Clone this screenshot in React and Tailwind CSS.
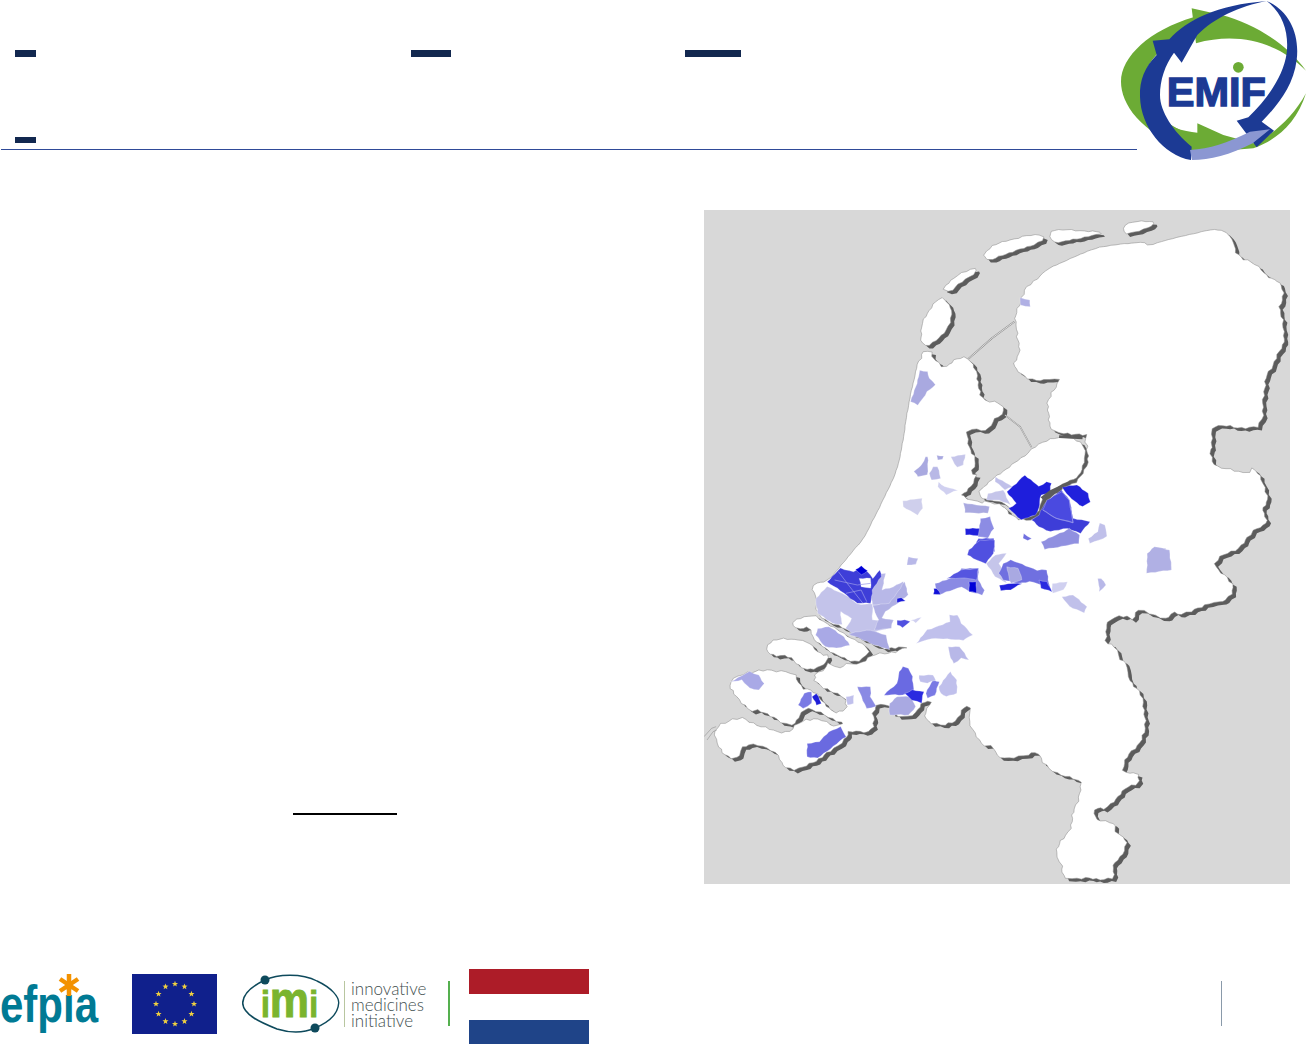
import React from "react";

// map points are in 0..1548 x 0..2022 (x stretched a bit, y is 3x)
const south = (pts) => pts.map(([x, y]) => [x, y + 990]);
const toPoints = (pts) => pts.map((p) => p.map((n) => n.toFixed(1)).join(",")).join(" ");

// wobble an edge so it reads as a traced border
const wobble = (pts, amp, calmAt) => {
  const out = [];
  let k = 0;
  pts.forEach((p, i) => {
    const q = pts[(i + 1) % pts.length];
    const dx = q[0] - p[0];
    const dy = q[1] - p[1];
    const len = Math.hypot(dx, dy) || 1;
    const steps = Math.max(1, Math.round(len / 11));
    const a = calmAt && calmAt(p) ? amp * 0.2 : amp;
    for (let s = 0; s < steps; s++) {
      const t = s / steps;
      const off = a * (Math.sin(k * 2.3) + 0.6 * Math.sin(k * 0.9 + 1));
      out.push([p[0] + dx * t - (dy / len) * off, p[1] + dy * t + (dx / len) * off]);
      k++;
    }
  });
  return out;
};

// round off the corners first, for the coastlines
const organic = (pts, amp, calmAt) => {
  const smooth = [];
  pts.forEach((p, i) => {
    const q = pts[(i + 1) % pts.length];
    smooth.push([p[0] * 0.75 + q[0] * 0.25, p[1] * 0.75 + q[1] * 0.25]);
    smooth.push([p[0] * 0.25 + q[0] * 0.75, p[1] * 0.25 + q[1] * 0.75]);
  });
  return wobble(smooth, amp, calmAt);
};

// the north sea side is smooth, the rest of the border is jagged
const isSeaSide = ([x, y]) => (x < 560 && y < 1130) || (y < 210 && x < 1400);

const mainland = organic([
  [572, 425], [600, 420], [603, 445], [635, 475], [660, 450], [695, 440], [710, 460], [725, 510], [730, 570],
  [780, 575], [795, 610], [770, 625], [745, 665], [695, 655], [695, 700], [720, 750], [705, 790], [725, 795],
  [690, 850], [680, 855], [700, 870], [730, 878], [745, 872], [790, 888], [805, 908], [840, 935], [885, 922],
  [905, 882], [955, 832], [990, 810], [1012, 770], [1015, 715], [1005, 690], [1012, 672], [930, 672], [910, 640],
  [908, 560], [945, 510], [920, 505], [890, 515], [845, 500], [815, 470], [835, 430], [825, 350], [820, 330],
  [845, 240], [880, 205], [910, 175], [960, 150], [1030, 115], [1090, 103], [1130, 100], [1160, 95], [1175, 108],
  [1220, 90], [1290, 72], [1340, 58], [1375, 62], [1395, 85], [1410, 140], [1470, 170], [1490, 205], [1525, 215],
  [1530, 260], [1520, 300], [1530, 340], [1535, 390], [1510, 450], [1480, 510], [1475, 650], [1430, 655],
  [1350, 645], [1340, 660], [1345, 710], [1335, 720], [1345, 765], [1390, 780], [1435, 790], [1450, 770],
  [1480, 820], [1490, 870], [1475, 900], [1490, 940], [1440, 970], [1415, 1020],
  ...south([
    [1370, 40], [1345, 80], [1395, 125], [1400, 150], [1370, 190], [1340, 185], [1270, 225], [1235, 215], [1225, 240],
    [1200, 230], [1170, 215], [1140, 210], [1140, 240], [1110, 225], [1060, 245], [1065, 285], [1060, 305], [1090, 325],
    [1095, 350], [1120, 375], [1115, 405], [1160, 470], [1165, 540], [1165, 590], [1110, 660], [1105, 700], [1145, 695],
    [1150, 730], [1110, 745], [1065, 810], [1030, 800], [1035, 840], [1085, 850], [1090, 880], [1115, 895], [1110, 945],
    [1075, 975], [1090, 1015], [1045, 1018], [1010, 1015], [960, 1015], [945, 1005], [945, 970], [930, 945], [935, 910],
    [965, 880], [975, 820], [990, 770], [1000, 730], [985, 720], [945, 705], [900, 680], [880, 630], [850, 650],
    [775, 655], [765, 620], [735, 615], [700, 555], [705, 510], [690, 495], [655, 560], [585, 545], [583, 510],
    [605, 490], [585, 480], [550, 530], [500, 530], [490, 490], [445, 500], [450, 580], [385, 570], [380, 590],
    [345, 625], [300, 660], [250, 690], [205, 680], [195, 635], [125, 610], [95, 625], [95, 655], [65, 655],
    [30, 610], [30, 560], [90, 530], [130, 550], [215, 585], [260, 540], [300, 535], [345, 560], [370, 548],
    [345, 540], [280, 505], [265, 505], [240, 555], [210, 550], [185, 535], [150, 510], [120, 515], [95, 480],
    [60, 435], [100, 400], [160, 390], [235, 395], [255, 440], [290, 455], [320, 490], [340, 520], [375, 510],
    [375, 470], [330, 455], [280, 410], [325, 385], [328, 365], [350, 385], [385, 370], [410, 375], [440, 345],
    [490, 340], [550, 318], [490, 328], [440, 312], [400, 285], [370, 265], [305, 232], [295, 200], [300, 170],
    [285, 155], [290, 130], [325, 125], [360, 80], [395, 30], [420, 0],
  ]),
  [460, 900], [490, 830], [510, 780], [525, 700], [540, 580],
], 2.5, isSeaSide);

const islands = [
  [[572, 395], [575, 340], [600, 290], [625, 262], [640, 270], [655, 300], [650, 350], [610, 395], [590, 410]],
  [[628, 235], [670, 195], [715, 172], [722, 185], [680, 215], [650, 248]],
  [[738, 130], [770, 100], [880, 70], [905, 85], [860, 110], [800, 130], [750, 155]],
  [[913, 65], [930, 58], [1045, 65], [1050, 72], [990, 85], [930, 100], [915, 85]],
  [[1105, 60], [1115, 38], [1185, 32], [1190, 45], [1120, 75]],
  // flevoland
  [[728, 840], [770, 800], [850, 735], [870, 712], [930, 678], [990, 688], [1008, 720], [1003, 770], [985, 805],
    [950, 820], [895, 860], [880, 915], [842, 925], [805, 895], [790, 875], [740, 868], [728, 860]],
  ...[
    // goeree
    [[230, 240], [290, 225], [310, 240], [375, 285], [430, 320], [438, 340], [400, 370], [350, 345], [320, 325],
      [290, 300], [280, 260], [245, 270]],
    // schouwen
    [[160, 320], [190, 295], [270, 300], [310, 345], [330, 345], [320, 375], [280, 390], [250, 380], [225, 345], [180, 350]],
  ].map(south),
].map((pts) => organic(pts, 1.5));

const northAreas = [
  ["#b0b0e4", [[835, 262], [860, 270], [862, 290], [835, 285]]],
  ["#a9a9e0", [[570, 480], [590, 485], [595, 505], [612, 525], [590, 545], [565, 585], [545, 575], [560, 530]]],
  ["#a9a9e0", [[585, 740], [592, 740], [590, 795], [565, 800], [555, 785], [575, 765]]],
  ["#a9a9e0", [[615, 735], [632, 738], [630, 748], [618, 750]]],
  ["#c5c5ea", [[652, 740], [690, 733], [685, 765], [668, 772]]],
  ["#b8b8e6", [[605, 770], [618, 770], [625, 805], [600, 810], [595, 790]]],
  ["#d0d0f0", [[620, 815], [635, 830], [670, 840], [640, 855], [618, 830]]],
  ["#cfcfec", [[525, 872], [575, 865], [578, 895], [565, 915], [525, 890]]],
  ["#c0c0ea", [[770, 800], [815, 830], [795, 840], [770, 815]]],
  ["#c5c5ea", [[750, 850], [790, 840], [810, 885], [780, 870], [745, 870]]],
  ["#a9a9e0", [[685, 878], [720, 885], [755, 890], [750, 910], [690, 908]]],
  ["#3d3dd8", [[945, 840], [965, 870], [975, 925], [1020, 935], [995, 970], [960, 955], [915, 965], [885, 950], [865, 930], [885, 915], [900, 880]]],
  ["#4a4ae0", [[905, 870], [945, 845], [965, 870], [975, 938], [930, 925], [895, 900]]],
  ["#1e1edc", [[848, 795], [885, 830], [905, 815], [918, 820], [912, 850], [890, 855], [885, 895], [875, 915], [838, 930], [805, 895], [825, 880], [800, 845]]],
  ["#2020dc", [[945, 830], [985, 825], [1015, 850], [1020, 875], [1000, 890], [985, 880], [965, 860]]],
  ["#9090e0", [[890, 995], [950, 965], [965, 955], [992, 975], [990, 1000], [900, 1018]]],
  ["#c0c0ea", [[1015, 985], [1040, 965], [1045, 940], [1060, 945], [1065, 980], [1020, 1000]]],
  ["#7070e0", [[845, 970], [865, 985], [855, 992], [843, 985]]],
  ["#2020dc", [[690, 955], [730, 955], [732, 978], [692, 975]]],
  ["#8c8ce4", [[730, 925], [755, 920], [765, 955], [750, 985], [725, 980]]],
  ["#5050e0", [[725, 985], [765, 985], [768, 1025], [708, 1025]]],
  ["#c0c0ea", [[1185, 1015], [1220, 1015], [1222, 1022], [1180, 1022]]],
];

const southAreas = [
  ["#b8b8e8", [[540, 50], [565, 55], [560, 72], [535, 75]]],
  ["#b0b0e4", [[1170, 40], [1190, 20], [1230, 30], [1235, 90], [1170, 100]]],
  ["#b8b8e8", [[1040, 115], [1050, 115], [1062, 135], [1045, 155]]],
  ["#c0c0ea", [[945, 170], [975, 165], [1012, 200], [1005, 218], [965, 200]]],
  ["#d0d0f0", [[920, 130], [960, 125], [950, 150], [920, 160]]],
  ["#5050e0", [[730, 0], [768, 0], [765, 40], [745, 70], [720, 60], [695, 45], [700, 30]]],
  ["#c5c5ea", [[745, 70], [770, 45], [800, 40], [780, 70], [800, 130], [770, 110]]],
  ["#7070e0", [[790, 70], [810, 60], [880, 90], [905, 90], [915, 150], [880, 130], [860, 125], [830, 130], [790, 120], [780, 100]]],
  ["#a9a9e2", [[800, 80], [830, 85], [840, 120], [810, 130]]],
  ["#2a2ae0", [[885, 120], [905, 125], [920, 155], [890, 145]]],
  ["#2020dc", [[780, 135], [815, 130], [840, 130], [810, 150], [785, 152]]],
  ["#8a8ae4", [[610, 130], [640, 120], [670, 105], [680, 85], [725, 85], [725, 120], [740, 150], [735, 165], [700, 155], [680, 140], [620, 165]]],
  ["#5555e0", [[640, 115], [680, 90], [725, 85], [720, 120], [700, 115]]],
  ["#0000d8", [[700, 125], [718, 125], [720, 158], [700, 155]]],
  ["#1010d8", [[607, 145], [615, 145], [625, 163], [607, 163]]],
  ["#c3c3ea", [[295, 175], [325, 140], [375, 165], [405, 192], [445, 192], [445, 240], [500, 240], [490, 265], [470, 270], [400, 290], [375, 265], [390, 235], [360, 215], [365, 255], [340, 250], [300, 220]]],
  ["#b8b8e8", [[440, 150], [460, 100], [480, 100], [470, 150], [500, 140], [525, 125], [537, 160], [505, 195], [445, 195]]],
  ["#b0b0e4", [[445, 195], [490, 190], [530, 125], [540, 165], [480, 215], [470, 235], [500, 240], [495, 265], [450, 270], [460, 240]]],
  ["#a9a9e2", [[380, 280], [440, 270], [480, 285], [490, 330], [440, 310], [400, 290]]],
  ["#3e3ed8", [[325, 125], [360, 85], [395, 95], [415, 80], [432, 95], [445, 115], [465, 90], [468, 110], [445, 150], [440, 190], [405, 190], [370, 160]]],
  ["#0000d8", [[400, 88], [415, 78], [432, 92], [415, 105]]],
  ["#ffffff", [[410, 115], [440, 115], [440, 145], [415, 140]]],
  ["#5050e0", [[510, 240], [530, 240], [545, 245], [525, 262], [510, 255]]],
  ["#d0d0f0", [[545, 240], [575, 232], [560, 248]]],
  ["#1818d8", [[510, 175], [522, 172], [532, 182], [510, 188]]],
  ["#a9a9e6", [[300, 265], [330, 260], [370, 290], [385, 315], [350, 325], [320, 320], [295, 285]]],
  ["#c0c0ec", [[560, 310], [590, 270], [650, 245], [648, 225], [670, 225], [680, 250], [710, 285], [685, 300], [600, 295], [575, 305]]],
  ["#b8b8e8", [[645, 320], [675, 320], [700, 360], [680, 355], [660, 370], [648, 345]]],
  ["#6a6ae2", [[515, 395], [525, 380], [540, 385], [550, 410], [555, 450], [525, 465], [475, 465], [510, 430]]],
  ["#7a7ae4", [[590, 475], [585, 460], [605, 420], [622, 425], [610, 465]]],
  ["#c0c0ec", [[620, 440], [650, 395], [668, 420], [668, 460], [640, 470], [625, 460]]],
  ["#c0c0ec", [[568, 405], [605, 405], [612, 420], [590, 430], [570, 425]]],
  ["#a9a9e2", [[490, 490], [510, 470], [545, 470], [560, 500], [540, 525], [490, 525]]],
  ["#2a2ae0", [[530, 460], [550, 450], [580, 455], [575, 490], [550, 480]]],
  ["#8a8ae4", [[405, 440], [440, 440], [440, 470], [455, 500], [430, 505], [415, 470]]],
  ["#c0c0ec", [[375, 470], [395, 465], [395, 490], [378, 495]]],
  ["#a9a9e6", [[70, 425], [120, 395], [145, 405], [158, 430], [145, 450], [120, 445], [100, 420]]],
  ["#7a7ae4", [[248, 495], [265, 460], [285, 455], [285, 490], [262, 505]]],
  ["#1e1ed8", [[285, 470], [298, 460], [310, 490], [298, 495]]],
  ["#6a6ae0", [[272, 610], [305, 605], [330, 575], [360, 560], [375, 590], [300, 655], [272, 650]]],
];

const NetherlandsMap = () => (
  <svg viewBox="0 0 1548 2022" preserveAspectRatio="none" className="block w-[586px] h-[674px] bg-[#d8d8d8]">
    <g fill="#5c5c5c" transform="translate(10 9)">
      <polygon points={toPoints(mainland)} />
      {islands.map((pts, i) => <polygon key={i} points={toPoints(pts)} />)}
    </g>
    <g fill="#ffffff" stroke="#8a8a8a" strokeWidth="1.5">
      <polygon points={toPoints(mainland)} />
      {islands.map((pts, i) => <polygon key={i} points={toPoints(pts)} />)}
    </g>
    <g stroke="#ffffff" strokeOpacity="0.5" strokeWidth="1.5">
      {northAreas.map(([fill, pts], i) => <polygon key={i} fill={fill} points={toPoints(wobble(pts, 1))} />)}
      {southAreas.map(([fill, pts], i) => <polygon key={i} fill={fill} points={toPoints(wobble(south(pts), 1))} />)}
    </g>
    <g fill="none" stroke="#9a9aea" strokeWidth="2">
      <polyline points="355,1085 385,1130 420,1180" />
      <polyline points="345,1110 405,1125 440,1120" />
      <polyline points="375,1150 415,1140 430,1175" />
      <polyline points="895,900 930,925 975,938" />
      <polyline points="945,845 965,870 975,938" />
    </g>
    <polyline points="892,865 915,845 965,818" fill="none" stroke="#5c5c5c" strokeWidth="8" />
    <polyline points="938,680 1000,684" fill="none" stroke="#5c5c5c" strokeWidth="8" />
    <polyline points="698,447 760,385 820,335" fill="none" stroke="#8a8a8a" strokeWidth="5" />
    <polyline points="698,447 760,385 820,335" fill="none" stroke="#e8e8e8" strokeWidth="2.5" />
    <polyline points="795,615 835,650 865,712" fill="none" stroke="#8a8a8a" strokeWidth="4" />
    <polyline points="795,615 835,650 865,712" fill="none" stroke="#e8e8e8" strokeWidth="2" />
    <polyline points="0,1580 20,1555 32,1550" fill="none" stroke="#8a8a8a" strokeWidth="1.5" />
    <polyline points="8,1590 24,1565 34,1560" fill="none" stroke="#8a8a8a" strokeWidth="1.5" />
  </svg>
);

const EmifLogo = () => (
  <svg viewBox="0 0 588 495" className="block w-[196px] h-[165px]">
    {/* green swooshes */}
    <path d="M245,25 L335,45 C430,70 530,130 588,212 C520,140 400,90 258,130 Z" fill="#6cab35" />
    <path d="M250,52 C120,90 33,170 33,245 C33,310 90,400 240,450 L300,420 C200,400 110,340 100,260 C100,190 150,140 250,80 Z" fill="#6cab35" />
    <path d="M135,345 C170,380 220,395 262,398 L262,370 L340,405 L430,430 C490,405 550,350 588,280 C560,370 500,420 430,445 L250,460 Z" fill="#6cab35" />
    {/* blue arcs */}
    <path d="M128,122 L178,118 C230,60 320,15 470,3 C390,18 310,55 262,105 L215,188 L192,158 C165,195 150,240 150,285 C150,335 190,395 245,440 L243,480 C160,465 92,380 90,290 C88,240 105,200 140,165 Z" fill="#1c3a94" />
    <path d="M470,3 C535,30 570,100 560,180 C550,260 500,320 455,365 L492,392 L440,442 L380,362 L415,352 C470,300 520,230 530,160 C537,100 520,40 470,3 Z" fill="#1c3a94" />
    {/* light band at the bottom */}
    <path d="M240,450 C300,445 350,430 420,395 L480,388 L428,430 C360,465 300,480 246,480 Z" fill="#8b97d2" />
    <text x="170" y="318" fontFamily="'Liberation Sans', Arial, sans-serif" fontWeight="700" fontSize="124" fill="#1c3a94" stroke="#1c3a94" strokeWidth="4" textLength="298" lengthAdjust="spacingAndGlyphs">EMIF</text>
    <circle cx="385" cy="202" r="16" fill="#6cab35" />
  </svg>
);

const EfpiaLogo = () => (
  <svg viewBox="0 0 100 66" className="block w-[100px] h-[66px]">
    <text x="0" y="50" fontFamily="'Liberation Sans', Arial, sans-serif" fontWeight="700" fontSize="52" fill="#007a94" textLength="98" lengthAdjust="spacingAndGlyphs">efpia</text>
    <g stroke="#f39200" strokeWidth="4.5">
      <line x1="69" y1="2" x2="69" y2="24" />
      <line x1="60" y1="7" x2="78" y2="19" />
      <line x1="78" y1="7" x2="60" y2="19" />
    </g>
  </svg>
);

const star = (cx, cy, r) => {
  const pts = [];
  for (let i = 0; i < 10; i++) {
    const a = -Math.PI / 2 + (i * Math.PI) / 5;
    const rad = i % 2 ? r * 0.42 : r;
    pts.push(`${cx + rad * Math.cos(a)},${cy + rad * Math.sin(a)}`);
  }
  return pts.join(" ");
};

const EuFlag = () => (
  <svg viewBox="0 0 85 60" className="block w-[85px] h-[60px]">
    <rect width="85" height="60" fill="#10208c" />
    {Array.from({ length: 12 }).map((_, i) => {
      const a = (i * Math.PI) / 6;
      return <polygon key={i} points={star(43 + 19 * Math.cos(a), 30 + 20 * Math.sin(a), 3.2)} fill="#f0d040" />;
    })}
  </svg>
);

const ImiLogo = () => (
  <div className="flex items-start w-[186px]">
    <svg viewBox="0 0 98 62" className="block w-[98px] h-[62px] shrink-0">
      <path d="M23,7 C35,1 60,0 75,8 C90,15 97,24 96.7,30 C96,42 85,50 73,55" fill="none" stroke="#0e4a5c" strokeWidth="1.4" />
      <path d="M23,7 C8,14 1,22 0.7,30 C1,42 20,50 35,56 C48,60 62,60 73,55" fill="none" stroke="#0e4a5c" strokeWidth="1.6" />
      <circle cx="23" cy="7" r="4.5" fill="#0e4a5c" />
      <circle cx="73" cy="55" r="4.5" fill="#0e4a5c" />
      <text x="19" y="44" fontFamily="'Liberation Sans', Arial, sans-serif" fontWeight="700" fontSize="36" fill="#7ab42e" stroke="#7ab42e" strokeWidth="1" textLength="57" lengthAdjust="spacingAndGlyphs">
        i<tspan fontSize="50">m</tspan>i
      </text>
    </svg>
    <div className="w-px h-[46px] mt-[8px] ml-[4px] bg-[#b8c6a0]" />
    <div className="ml-[6px] mt-[8px] text-[17px] leading-[16px] font-light text-[#3f4f4f] font-['Lato',sans-serif]">
      <div>innovative</div>
      <div>medicines</div>
      <div>initiative</div>
    </div>
  </div>
);

export default function App() {
  return (
    <div className="relative w-[1306px] h-[1044px] overflow-hidden bg-white font-['Liberation_Sans',Arial,sans-serif]">
      <header className="ml-px w-[1136px] h-[150px] border-b border-[#2f4a98] pl-[14px] pt-[50px]">
        <div className="flex">
          <div className="w-[21px] h-[7px] bg-[#12284f]" />
          <div className="w-[40px] h-[7px] ml-[375px] bg-[#12284f]" />
          <div className="w-[56px] h-[7px] ml-[234px] bg-[#12284f]" />
        </div>
        <div className="w-[21px] h-[6px] mt-[80px] bg-[#12284f]" />
      </header>

      <div className="absolute top-0 left-[1110px]">
        <EmifLogo />
      </div>

      <main className="flex h-[810px]">
        <div className="w-[704px] pl-[293px] pt-[663px]">
          <div className="w-[104px] h-[2px] bg-black" />
        </div>
        <div className="pt-[60px]">
          <NetherlandsMap />
        </div>
      </main>

      <footer className="flex items-start h-[84px]">
        <div className="mt-[12px]"><EfpiaLogo /></div>
        <div className="mt-[14px] ml-[32px]"><EuFlag /></div>
        <div className="mt-[13px] ml-[25px]"><ImiLogo /></div>
        <div className="mt-[21px] ml-[20px] w-[2px] h-[45px] bg-[#55b04f]" />
        <div className="mt-[9px] ml-[19px] w-[120px] h-[75px] flex flex-col">
          <div className="h-[25px] bg-[#ad1c28]" />
          <div className="h-[26px] bg-white" />
          <div className="h-[24px] bg-[#1f4488]" />
        </div>
        <div className="mt-[21px] ml-[632px] w-px h-[45px] bg-[#8a9aaa]" />
      </footer>
    </div>
  );
}
